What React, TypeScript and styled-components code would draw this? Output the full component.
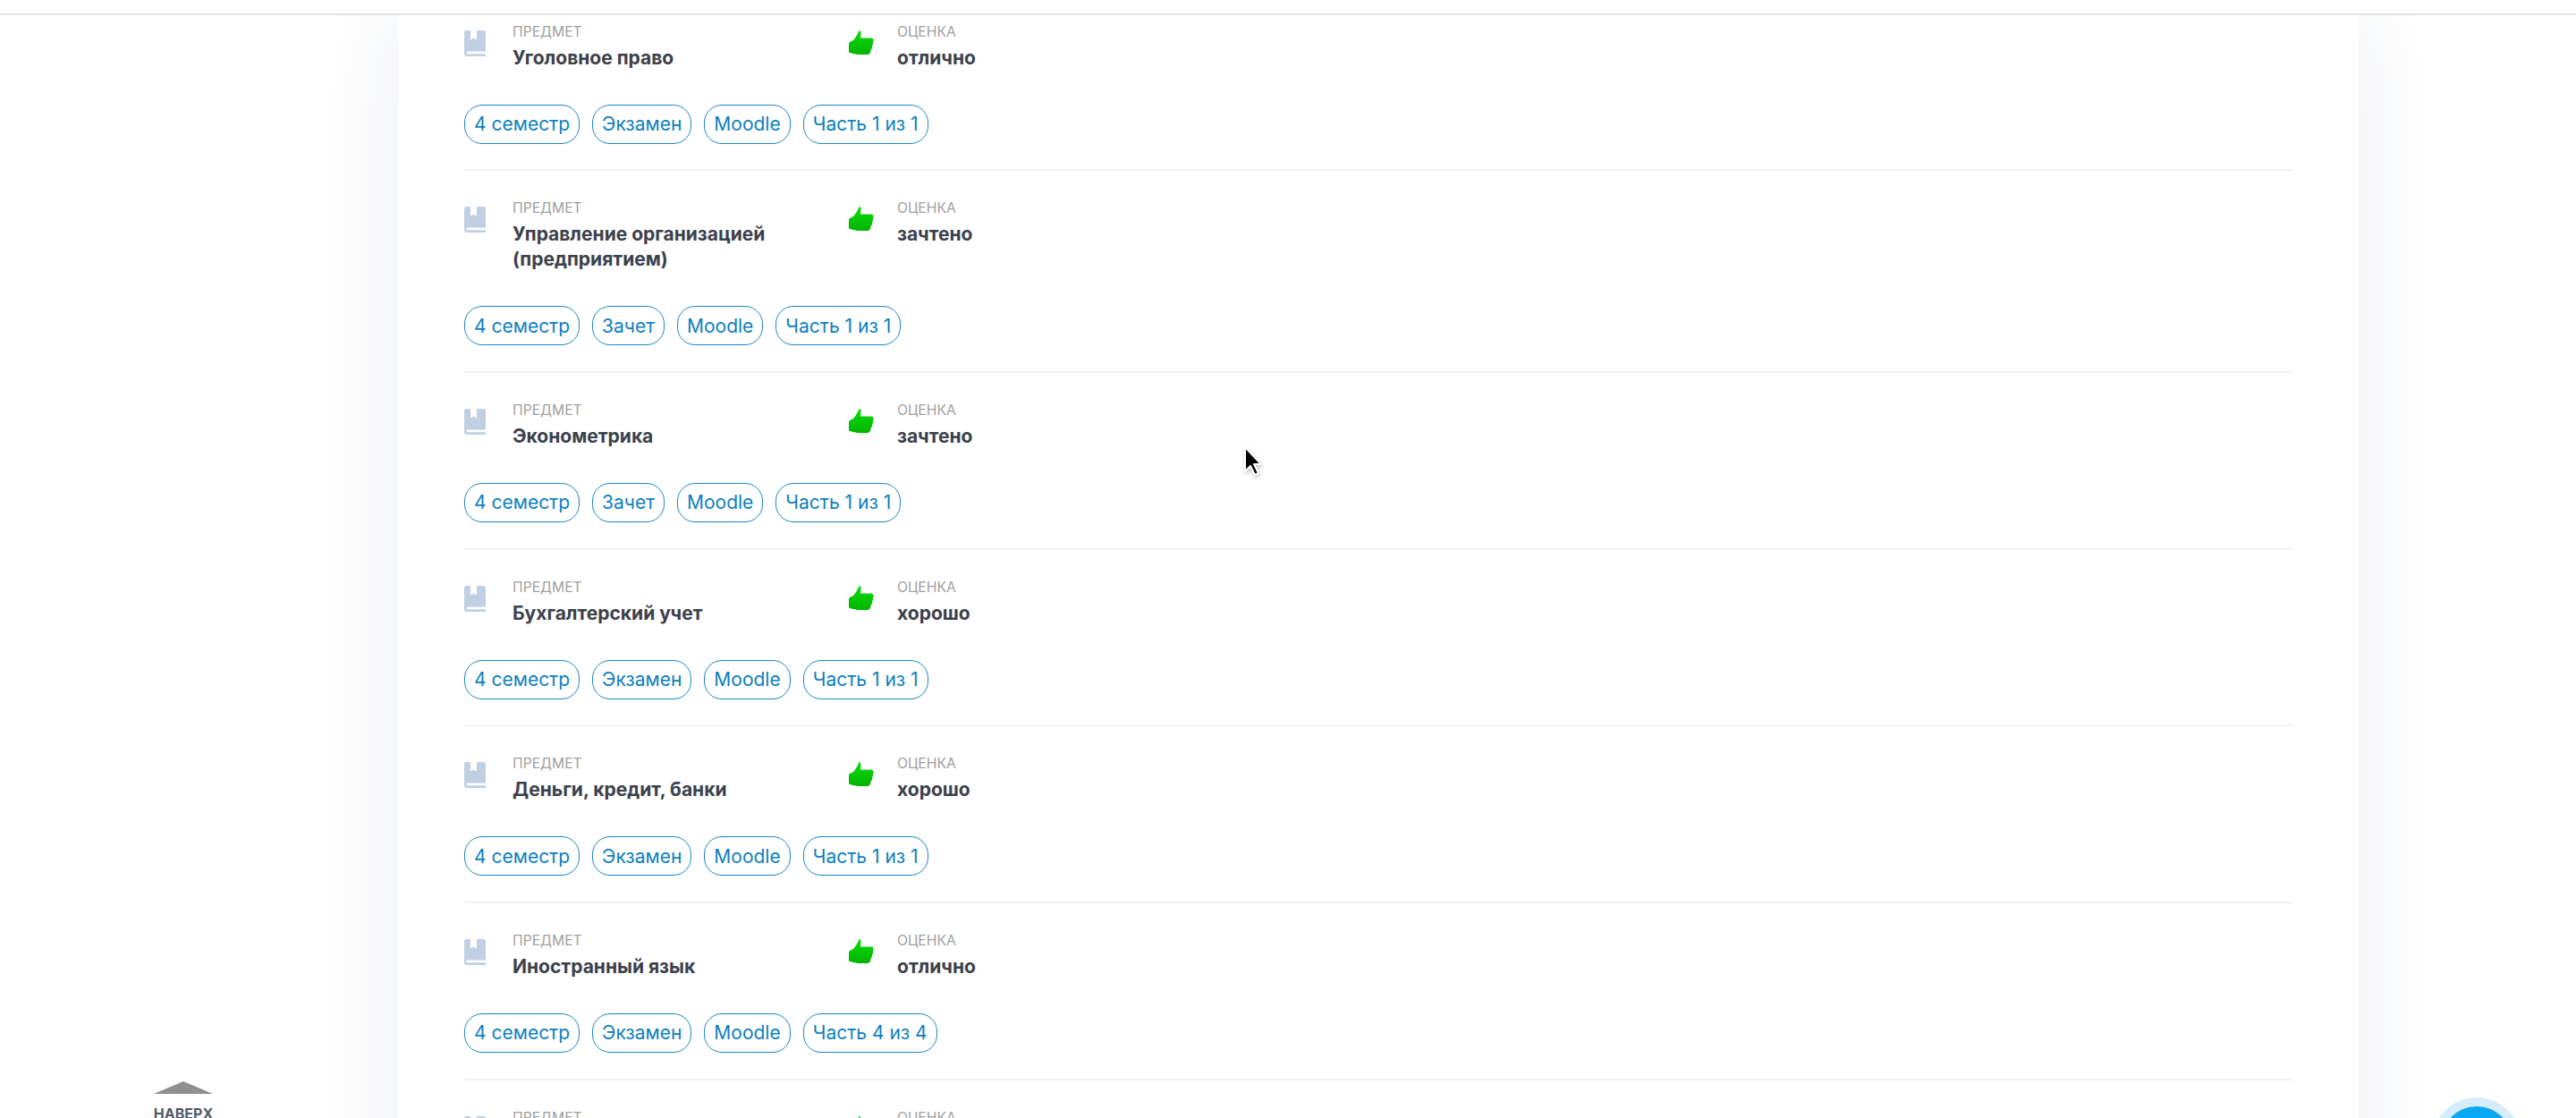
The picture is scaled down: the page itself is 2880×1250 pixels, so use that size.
import React from "react";
import styled, { createGlobalStyle } from "styled-components";

const Global = createGlobalStyle`
  html, body { margin: 0; padding: 0; background: #fff; height: 100%; overflow: hidden; }
  * { box-sizing: border-box; }
  body { font-family: Inter, "Noto Sans", sans-serif; }
`;

const Page = styled.div`
  width: 2880px;
  height: 1250px;
  overflow: hidden;
  position: relative;
  display: flex;
  flex-direction: column;
  background: #fff;
`;

const TopBar = styled.header`
  flex: none;
  height: 17px;
  background: #fff;
  border-bottom: 2px solid #e4e4e4;
  position: relative;
  z-index: 2;
`;

const Body = styled.main`
  flex: 1;
  min-height: 0;
  padding-left: 445px;
`;

const Card = styled.section`
  width: 2192px;
  min-height: 100%;
  background: #fff;
  padding: 0 74px;
  box-shadow: 0 0 100px rgba(30, 55, 110, 0.09);
`;

const Row = styled.article`
  padding: 32px 0 28.7px;
  border-bottom: 2px solid #f0f1f3;
  &:first-child { padding-top: 8.5px; }
  &:last-child { border-bottom: 0; }
`;

const Meta = styled.div`
  display: flex;
  align-items: flex-start;
`;

const Field = styled.div<{ $wide?: boolean }>`
  display: flex;
  align-items: flex-start;
  width: ${(p) => (p.$wide ? "430px" : "auto")};
`;

const IconSlot = styled.span`
  flex: none;
  width: 54px;
  padding-top: 8px;
  display: block;
  line-height: 0;
`;

const FieldText = styled.div<{ $wide?: boolean }>`
  width: ${(p) => (p.$wide ? "340px" : "auto")};
`;

const Label = styled.div`
  font-size: 15.7px;
  line-height: 20px;
  margin-bottom: 5px;
  color: #9f9f9f;
  text-transform: uppercase;
`;

const Value = styled.div`
  font-size: 21px;
  line-height: 28px;
  font-weight: 700;
  color: #3c414c;
`;

const Tags = styled.div`
  display: flex;
  gap: 14px;
  margin-top: 38px;
`;

const Tag = styled.span`
  height: 44px;
  padding: 0 10px;
  border: 1px solid #1b87c5;
  border-radius: 20px;
  display: flex;
  align-items: center;
  font-size: 21px;
  color: #0d80bf;
  white-space: nowrap;
`;

const ToTop = styled.div`
  position: absolute;
  left: 172px;
  top: 1209px;
  width: 66px;
  display: flex;
  flex-direction: column;
  align-items: center;
  z-index: 3;
`;

const ToTopArrow = styled.span`
  width: 0;
  height: 0;
  border-left: 33px solid transparent;
  border-right: 33px solid transparent;
  border-bottom: 14px solid #8f8f8f;
`;

const ToTopText = styled.span`
  margin-top: 12px;
  font-size: 16px;
  line-height: 20px;
  font-weight: 700;
  color: #505a68;
`;

const ChatButton = styled.div`
  position: absolute;
  left: 2729px;
  top: 1237px;
  width: 80px;
  height: 80px;
  border-radius: 50%;
  background: #0aa8f0;
  box-shadow: 0 0 0 10px #d5edfc;
  z-index: 3;
`;

const Cursor = styled.svg`
  position: absolute;
  left: 1386px;
  top: 495px;
  z-index: 4;
  filter: drop-shadow(1px 2px 2px rgba(0, 0, 0, 0.25));
`;

const BookIcon = () => (
  <svg width="24" height="29" viewBox="0 0 24 29">
    <path d="M0 2a2 2 0 0 1 2-2h5v10.5l3.5-2 3.5 2V0h8a2 2 0 0 1 2 2v21.5H4C2.8 23.500 2.500 24.200 2.500 25 2.500 25.800 3 26.300 4 26.300H24V29H3a3 3 0 0 1-3-3z" fill="#c0d0e2" />
  </svg>
);

const ThumbIcon = () => (
  <svg width="28" height="27" viewBox="0 0 28 27">
    <defs>
      <linearGradient id="th" x1="0" y1="0" x2="0" y2="1">
        <stop offset="0" stopColor="#0cdc0c" />
        <stop offset="1" stopColor="#00b400" />
      </linearGradient>
    </defs>
    <path d="M11.500 0c1.600.3 2.200 1.600 2 3.200L13 8.500h11.500c2 0 3.500 1.200 3.200 3l-.8 2c.5 1 .4 2-.4 3l-.6 2.300c.2 1-.3 2-1 2.400l-.9 3.400c-.5 1.600-1.600 2.400-3.200 2.400H10c-2 0-3.300-.4-4.800-.9L1 25c-.7-.2-1-.7-1-1.400V14.500c0-.8.4-1.200 1-1.600l4-1.900c2.400-2.800 4.800-6.400 6.500-11z" fill="url(#th)" />
  </svg>
);

const rows: { name: string; grade: string; kind: string; part: string }[] = [
  { name: "Уголовное право", grade: "отлично", kind: "Экзамен", part: "Часть 1 из 1" },
  { name: "Управление организацией (предприятием)", grade: "зачтено", kind: "Зачет", part: "Часть 1 из 1" },
  { name: "Эконометрика", grade: "зачтено", kind: "Зачет", part: "Часть 1 из 1" },
  { name: "Бухгалтерский учет", grade: "хорошо", kind: "Экзамен", part: "Часть 1 из 1" },
  { name: "Деньги, кредит, банки", grade: "хорошо", kind: "Экзамен", part: "Часть 1 из 1" },
  { name: "Иностранный язык", grade: "отлично", kind: "Экзамен", part: "Часть 4 из 4" },
  { name: "Философия", grade: "хорошо", kind: "Экзамен", part: "Часть 1 из 1" },
];

export default function App() {
  return (
    <Page>
      <Global />
      <TopBar />
      <Body>
        <Card>
          {rows.map((r) => (
            <Row key={r.name}>
              <Meta>
                <Field $wide>
                  <IconSlot><BookIcon /></IconSlot>
                  <FieldText $wide>
                    <Label>Предмет</Label>
                    <Value>{r.name}</Value>
                  </FieldText>
                </Field>
                <Field>
                  <IconSlot><ThumbIcon /></IconSlot>
                  <FieldText>
                    <Label>Оценка</Label>
                    <Value>{r.grade}</Value>
                  </FieldText>
                </Field>
              </Meta>
              <Tags>
                <Tag>4 семестр</Tag>
                <Tag>{r.kind}</Tag>
                <Tag>Moodle</Tag>
                <Tag>{r.part}</Tag>
              </Tags>
            </Row>
          ))}
        </Card>
      </Body>
      <ToTop>
        <ToTopArrow />
        <ToTopText>НАВЕРХ</ToTopText>
      </ToTop>
      <ChatButton />
      <Cursor width="24" height="40" viewBox="0 0 24 40">
        <path d="M6 5v27l6-6 5 10 4-2-5-10h8z" fill="#000" stroke="#fff" strokeWidth="2" strokeLinejoin="round" />
      </Cursor>
    </Page>
  );
}
